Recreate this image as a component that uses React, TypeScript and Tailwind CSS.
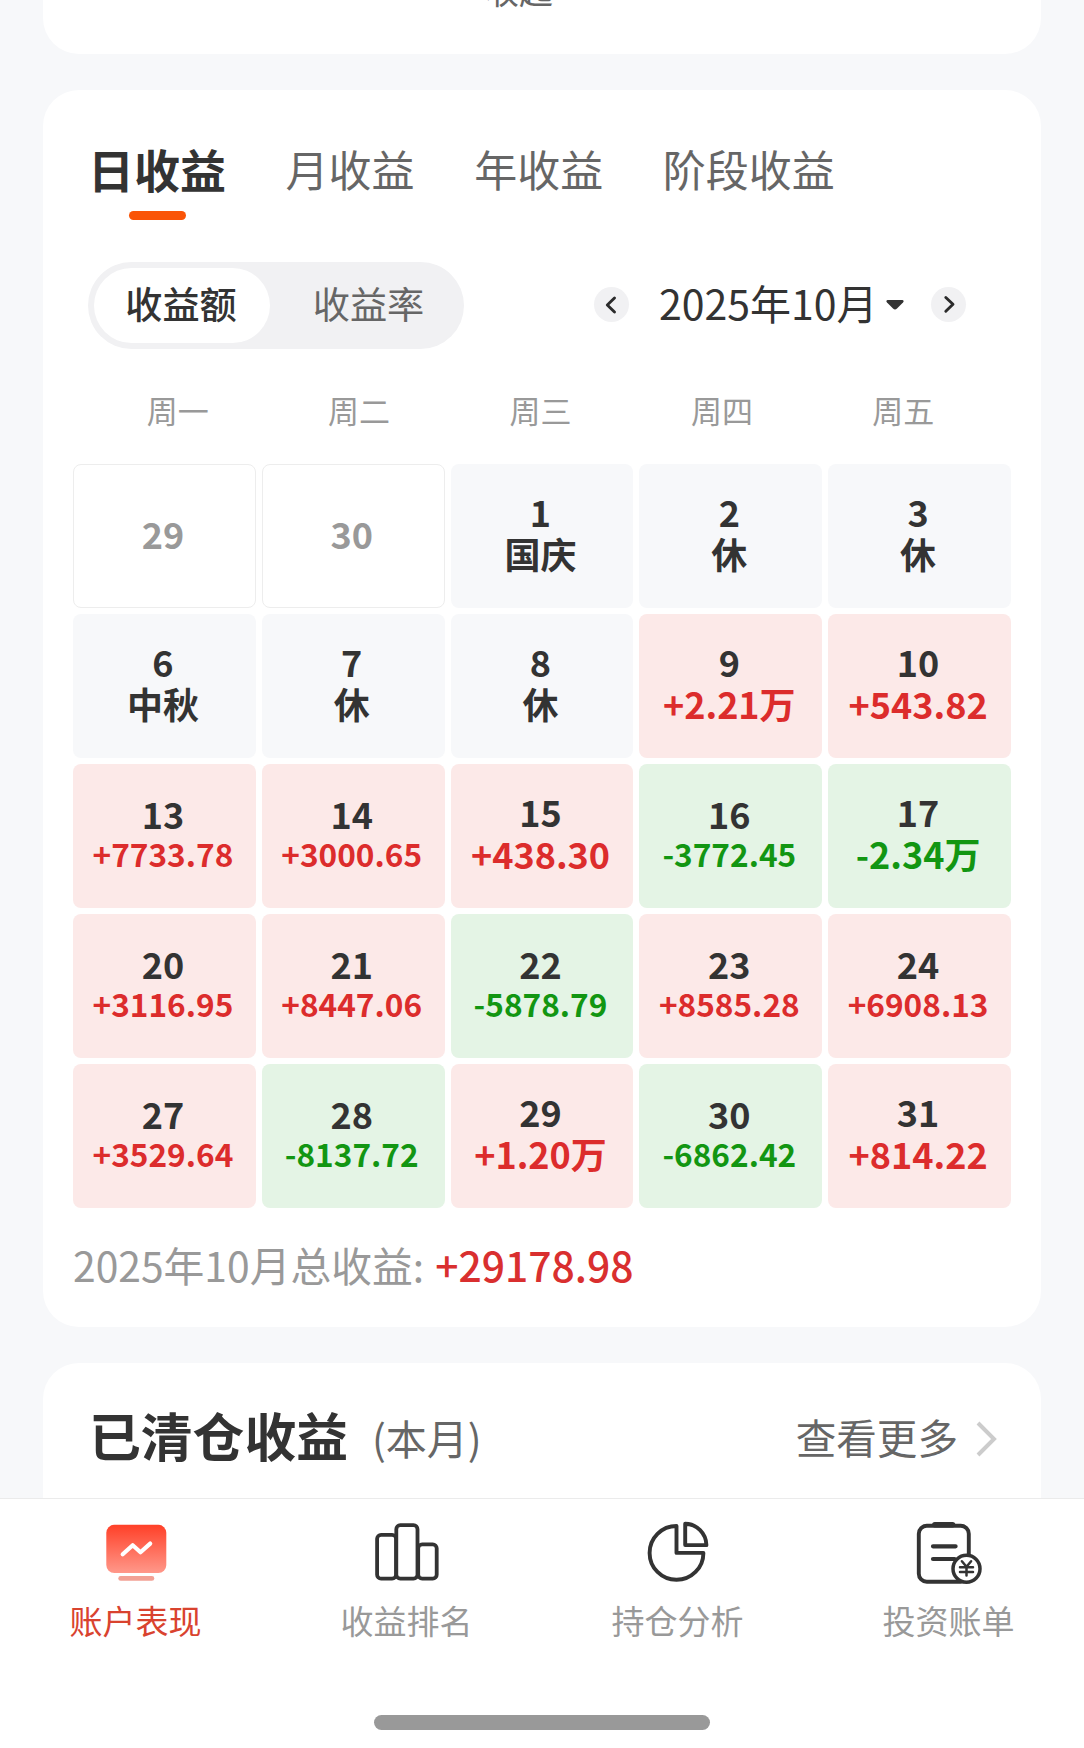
import clsx from "clsx";
import { useState } from "react";

type DayKind = "outside" | "closed" | "gain" | "loss";

interface Day {
  date: number;
  kind: DayKind;
  label?: string;
}

const TABS = ["日收益", "月收益", "年收益", "阶段收益"];
const MODES = ["收益额", "收益率"];
const WEEKDAYS = ["周一", "周二", "周三", "周四", "周五"];

const DAYS: Day[] = [
  { date: 29, kind: "outside" },
  { date: 30, kind: "outside" },
  { date: 1, kind: "closed", label: "国庆" },
  { date: 2, kind: "closed", label: "休" },
  { date: 3, kind: "closed", label: "休" },
  { date: 6, kind: "closed", label: "中秋" },
  { date: 7, kind: "closed", label: "休" },
  { date: 8, kind: "closed", label: "休" },
  { date: 9, kind: "gain", label: "+2.21万" },
  { date: 10, kind: "gain", label: "+543.82" },
  { date: 13, kind: "gain", label: "+7733.78" },
  { date: 14, kind: "gain", label: "+3000.65" },
  { date: 15, kind: "gain", label: "+438.30" },
  { date: 16, kind: "loss", label: "-3772.45" },
  { date: 17, kind: "loss", label: "-2.34万" },
  { date: 20, kind: "gain", label: "+3116.95" },
  { date: 21, kind: "gain", label: "+8447.06" },
  { date: 22, kind: "loss", label: "-5878.79" },
  { date: 23, kind: "gain", label: "+8585.28" },
  { date: 24, kind: "gain", label: "+6908.13" },
  { date: 27, kind: "gain", label: "+3529.64" },
  { date: 28, kind: "loss", label: "-8137.72" },
  { date: 29, kind: "gain", label: "+1.20万" },
  { date: 30, kind: "loss", label: "-6862.42" },
  { date: 31, kind: "gain", label: "+814.22" }
];

const cellStyles: Record<DayKind, string> = {
  outside: "border border-[#ededed] bg-white",
  closed: "bg-[#f7f8fa]",
  gain: "bg-[#fce9e8]",
  loss: "bg-[#e4f4e5]"
};

const labelStyles: Record<DayKind, string> = {
  outside: "text-[#999]",
  closed: "text-[#333]",
  gain: "text-[#dc2c2c]",
  loss: "text-[#129612]"
};

function DayCell({ day }: { day: Day }) {
  const isLong = (day.label ?? "").length > 7;

  return (
    <div
      className={clsx(
        "flex h-36 flex-col items-center justify-center rounded-lg pr-[3px] pb-[7px] text-[36px] font-bold",
        cellStyles[day.kind]
      )}
    >
      <span
        className={clsx(
          "leading-[42px]",
          day.kind === "outside" ? "text-[#999]" : "text-[#333]"
        )}
      >
        {day.date}
      </span>
      {day.label && (
        <span
          className={clsx(
            labelStyles[day.kind],
            isLong ? "text-[31.6px] leading-[39px]" : "leading-[43px]"
          )}
        >
          {day.label}
        </span>
      )}
    </div>
  );
}

function StepButton({ direction }: { direction: "prev" | "next" }) {
  return (
    <button className="flex h-[35px] w-[35px] items-center justify-center rounded-full bg-[#f1f1f3]">
      <svg
        width="35"
        height="35"
        viewBox="0 0 35 35"
        fill="none"
        stroke="#2b2b2b"
        strokeWidth="2.9"
        strokeLinecap="round"
        strokeLinejoin="round"
      >
        <path
          d={direction === "prev" ? "M20.5 11 L13.3 18 L20.5 25" : "M14.8 10.5 L22 17.3 L14.8 24.3"}
        />
      </svg>
    </button>
  );
}

function PerformanceIcon() {
  return (
    <svg width="68" height="68" viewBox="0 0 68 68" fill="none">
      <defs>
        <linearGradient id="screen" x1="0" y1="0" x2="0" y2="1">
          <stop offset="0" stopColor="#ff4028" />
          <stop offset="1" stopColor="#ff988a" />
        </linearGradient>
      </defs>
      <rect x="4.3" y="6.8" width="60" height="48.2" rx="8" fill="url(#screen)" />
      <rect x="16.3" y="58" width="36" height="4.8" rx="2.4" fill="#f2a195" />
      <path
        d="M20.7 36.3 L30.7 27.2 L38.5 34.2 L48.2 25.6"
        stroke="#fff"
        strokeWidth="4.2"
        strokeLinecap="round"
        strokeLinejoin="round"
      />
    </svg>
  );
}

function RankingIcon() {
  return (
    <svg width="68" height="68" viewBox="0 0 68 68" fill="none" stroke="#333" strokeWidth="3.8">
      <rect x="4.1" y="16.8" width="19" height="43.9" rx="4" />
      <rect x="23.3" y="7.2" width="21.2" height="53.5" rx="4" />
      <rect x="45.2" y="26.3" width="18.5" height="34.4" rx="4" />
    </svg>
  );
}

function HoldingsIcon() {
  return (
    <svg
      width="68"
      height="68"
      viewBox="0 0 68 68"
      fill="none"
      stroke="#333"
      strokeWidth="3.9"
      strokeLinejoin="round"
    >
      <path d="M32.5 8 A26.9 26.9 0 1 0 59.4 34.9 H32.5 Z" />
      <path d="M41.2 5.8 A21.6 21.6 0 0 1 62.4 27.1 H41.2 Z" />
    </svg>
  );
}

function BillIcon() {
  return (
    <svg
      width="68"
      height="68"
      viewBox="0 0 68 68"
      fill="none"
      stroke="#333"
      strokeWidth="3.9"
      strokeLinecap="round"
      strokeLinejoin="round"
    >
      <rect x="3.8" y="7.8" width="50" height="56" rx="8" />
      <path d="M19.8 6.7 H37.6" strokeWidth="5.4" />
      <path d="M18 28.3 H40.6 M18 41 H39.6" strokeWidth="4.2" />
      <circle cx="51.5" cy="50.8" r="13.5" fill="#fff" strokeWidth="3.5" />
      <path
        d="M46.9 43.3 L51.5 48.8 L56.1 43.3 M51.5 48.8 V57.4 M45 49.2 H58 M45 53.9 H58"
        strokeWidth="2.5"
      />
    </svg>
  );
}

const NAV_ITEMS = [
  { name: "账户表现", icon: PerformanceIcon },
  { name: "收益排名", icon: RankingIcon },
  { name: "持仓分析", icon: HoldingsIcon },
  { name: "投资账单", icon: BillIcon }
];

export default function App() {
  const [tab, setTab] = useState(TABS[0]);
  const [mode, setMode] = useState(MODES[0]);
  const [page, setPage] = useState(NAV_ITEMS[0].name);

  return (
    <div className="flex h-[1748px] w-[1084px] flex-col overflow-hidden bg-[#f7f8fa] font-['Noto_Sans_CJK_SC',sans-serif] text-[#333]">
      <main className="flex h-[1498px] flex-col overflow-hidden px-[43px]">
        <section className="flex h-[54px] shrink-0 justify-center rounded-b-[36px] bg-white">
          <p className="-mt-[34px] pr-[46px] text-[34px] leading-[48px] text-[#666]">收起</p>
        </section>

        <section className="mt-9 h-[1237px] shrink-0 rounded-[36px] bg-white px-[30px]">
          <div className="flex h-[130px] items-start gap-[59.6px] pt-[44px] pl-[15px]">
            {TABS.map((name) => (
              <button
                key={name}
                className={clsx(
                  "flex flex-col items-center whitespace-nowrap",
                  name === tab ? "text-[46px] font-bold" : "text-[43px] text-[#666]"
                )}
                onClick={() => setTab(name)}
              >
                <span className="leading-[68px]">{name}</span>
                {name === tab && (
                  <span className="mt-[9px] h-[9px] w-[57px] rounded-full bg-[#fa5407]" />
                )}
              </button>
            ))}
          </div>

          <div className="mt-[42px] flex h-[87px] items-center pl-[15px]">
            <div className="flex h-[87px] w-[376px] rounded-full bg-[#f1f1f3] p-[6px]">
              {MODES.map((name) => (
                <button
                  key={name}
                  className={clsx(
                    "h-[75px] shrink-0 rounded-full pb-[5px] text-[37.2px] leading-[70px]",
                    name === mode
                      ? "w-[176px] bg-white pr-[2px] font-medium"
                      : "w-[188px] pl-[9px] text-[#666]"
                  )}
                  onClick={() => setMode(name)}
                >
                  {name}
                </button>
              ))}
            </div>

            <div className="ml-[130px] flex items-center pb-[2px]">
              <StepButton direction="prev" />
              <span className="ml-[30px] pb-[5px] text-[41px] leading-[56px] whitespace-nowrap">
                2025年10月
              </span>
              <svg className="ml-[8px]" width="18" height="10" viewBox="0 0 18 10" fill="#333">
                <path d="M1.5 0 H16.5 Q18.5 0.8 17 2.4 L11 8.6 Q9 10.4 7 8.6 L1 2.4 Q-0.5 0.8 1.5 0 Z" />
              </svg>
              <div className="ml-[27px]">
                <StepButton direction="next" />
              </div>
            </div>
          </div>

          <div className="mt-[38px] grid grid-cols-5 pr-[17px] pl-[14px]">
            {WEEKDAYS.map((name) => (
              <span key={name} className="text-center text-[31px] leading-[46px] text-[#999]">
                {name}
              </span>
            ))}
          </div>

          <div className="mt-[31px] grid grid-cols-5 gap-[6px]">
            {DAYS.map((day, index) => (
              <DayCell key={index} day={day} />
            ))}
          </div>

          <p className="mt-[28px] text-[40.8px] leading-[58px] whitespace-nowrap text-[#999]">
            2025年10月总收益: <span className="ml-[2px] font-medium text-[#d92f2f]">+29178.98</span>
          </p>
        </section>

        <section className="mt-9 flex h-[200px] shrink-0 items-start rounded-t-[36px] bg-white pt-[34px] pr-[43px] pl-[46px]">
          <h2 className="text-[51.8px] leading-[76px] font-bold">已清仓收益</h2>
          <span className="mt-[7px] ml-[24px] text-[41px] leading-[66px] text-[#666]">(本月)</span>
          <button className="mt-[7px] ml-auto flex items-center text-[40.6px] leading-[66px] text-[#666]">
            查看更多
            <svg
              className="mt-[4px] ml-[18px]"
              width="22"
              height="38"
              viewBox="0 0 22 38"
              fill="none"
              stroke="#ccc"
              strokeWidth="4"
            >
              <path d="M2 3 L18 19 L2 35" />
            </svg>
          </button>
        </section>
      </main>

      <nav className="flex h-[250px] flex-col items-center border-t border-[#ebebeb] bg-white">
        <div className="grid w-full grid-cols-4 pt-[19px]">
          {NAV_ITEMS.map(({ name, icon: Icon }) => (
            <button
              key={name}
              className={clsx(
                "flex flex-col items-center text-[33px] leading-[48px]",
                name === page ? "text-[#d9432f]" : "text-[#999]"
              )}
              onClick={() => setPage(name)}
            >
              <Icon />
              <span className="mt-[10px]">{name}</span>
            </button>
          ))}
        </div>
        <div className="mt-[71px] h-[15px] w-[336px] rounded-full bg-[#999]" />
      </nav>
    </div>
  );
}
